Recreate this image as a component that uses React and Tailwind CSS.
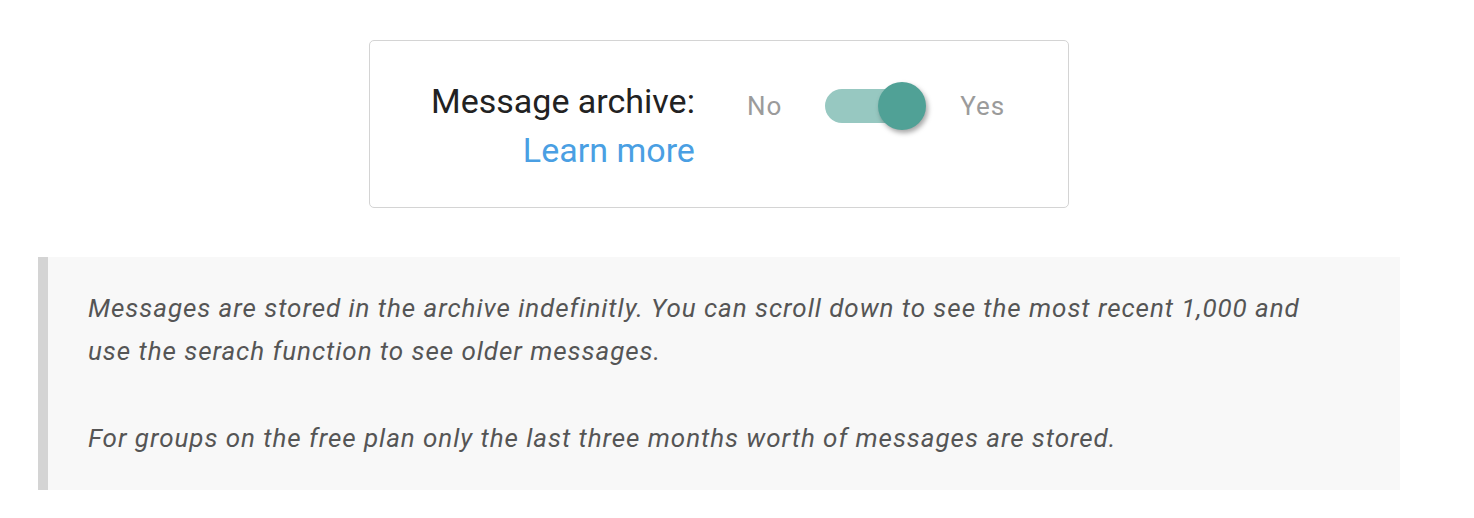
import React from "react";

export default function App() {
  return (
    <div className="min-h-[518px] bg-white font-['Roboto',sans-serif] pt-[40px]">
      <div className="ml-[38px] w-[1362px]">
        <div className="mx-auto w-[700px] h-[168px] rounded-[5px] border-[1.5px] border-[#d4d4d4] bg-white pt-[36px] pl-[61px] flex items-start">
          <div className="flex flex-col items-end text-[34px] leading-[49px]">
            <span className="text-[#222222]">Message archive:</span>
            <a className="text-[#4a9fe3] cursor-pointer">Learn more</a>
          </div>
          <div className="h-[49px] mt-[4px] flex items-center text-[26px] leading-[28px] tracking-[1px] text-[#9b9b9b]">
            <span className="ml-[52px]">No</span>
            <div className="relative ml-[43px] w-[102px] h-[48px]">
              <div className="absolute left-0 top-[7px] w-[90px] h-[34px] rounded-full bg-[#97c8c1]" />
              <div className="absolute left-[53px] top-0 w-[48px] h-[48px] rounded-full bg-[#50a196] shadow-[2px_3px_5px_rgba(0,0,0,0.35)]" />
            </div>
            <span className="ml-[33px]">Yes</span>
          </div>
        </div>
        <div className="mt-[49px] border-l-[10px] border-[#d4d4d4] bg-[#f8f8f8] pl-[40px] pr-[80px] pt-[30px] pb-[30px] text-[26px] leading-[43px] tracking-[0.95px] italic text-[#555555]">
          <p className="mb-[44px]">
            Messages are stored in the archive indefinitly. You can scroll down to see the most recent 1,000 and use the serach function to see older messages.
          </p>
          <p>For groups on the free plan only the last three months worth of messages are stored.</p>
        </div>
      </div>
    </div>
  );
}
